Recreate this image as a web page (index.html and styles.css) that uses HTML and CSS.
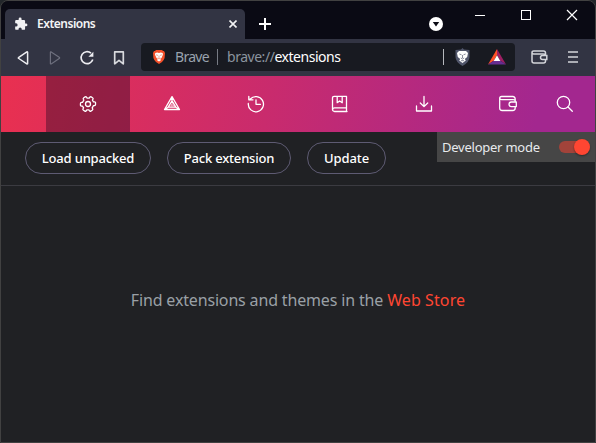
FILE: index.html
```html
<!DOCTYPE html>
<html lang="en">
<head>
<meta charset="utf-8">
<title>Extensions</title>
<link rel="stylesheet" href="styles.css">
</head>
<body>
<div class="window">
  <header class="titlebar">
    <div class="tab">
      <svg class="puzzle" width="14" height="14" viewBox="0 0 24 24"><path fill="#f1f1f3" d="M20.500 11H19V7a2 2 0 0 0-2-2h-4V3.500a2.500 2.500 0 0 0-5 0V5H4a2 2 0 0 0-2 2v3.800h1.500a2.700 2.700 0 0 1 0 5.400H2V20a2 2 0 0 0 2 2h3.800v-1.500a2.700 2.700 0 0 1 5.400 0V22H17a2 2 0 0 0 2-2v-4h1.500a2.500 2.500 0 0 0 0-5z"/></svg>
      <span class="tab-title">Extensions</span>
      <svg class="tab-close" width="8" height="8" viewBox="0 0 8 8"><path d="M.5.5l7 7M7.500.5l-7 7" stroke="#f1f1f3" stroke-width="1.600"/></svg>
    </div>
    <svg class="new-tab" width="12" height="12" viewBox="0 0 12 12"><path d="M6 0v12M0 6h12" stroke="#fff" stroke-width="2"/></svg>
    <svg class="tab-search" width="14" height="14" viewBox="0 0 14 14"><circle cx="7" cy="7" r="7" fill="#fff"/><path d="M3.800 5h6.400L7 9.500z" fill="#0a0a14"/></svg>
    <div class="controls">
      <svg width="46" height="28" viewBox="0 0 46 28"><path d="M18 14.500h10" stroke="#fff"/></svg>
      <svg width="46" height="28" viewBox="0 0 46 28"><rect x="18.500" y="9.500" width="9" height="9" fill="none" stroke="#fff"/></svg>
      <svg width="46" height="28" viewBox="0 0 46 28"><path d="M18 9l10 10M28 9L18 19" stroke="#fff" stroke-width="1.200"/></svg>
    </div>
  </header>

  <div class="toolbar">
    <div class="nav-buttons">
      <svg width="32" height="36" viewBox="0 0 32 36"><path d="M20.600 12.400v11q0 .9-.8.500L11.800 18.500q-.9-.6 0-1.200l8-5.400q.8-.4.800.5z" fill="none" stroke="#ececf0" stroke-width="1.500"/></svg>
      <svg width="32" height="36" viewBox="0 0 32 36"><path d="M11.400 12.400v11q0 .9.800.5l8-5.400q.9-.6 0-1.200l-8-5.400q-.8-.4-.8.500z" fill="none" stroke="#6d6f7d" stroke-width="1.200"/></svg>
      <svg width="32" height="36" viewBox="0 0 32 36"><path d="M21.800 19.600a6 6 0 1 1-1.800-6.500" fill="none" stroke="#ececf0" stroke-width="1.700"/><path d="M22.400 11.700v5h-5z" fill="#ececf0"/></svg>
      <svg width="32" height="36" viewBox="0 0 32 36"><path d="M11.700 11.800h8.600v12L16 20.300l-4.300 3.500z" fill="none" stroke="#d9dade" stroke-width="1.700" stroke-linejoin="round"/></svg>
    </div>
    <div class="address">
      <svg width="12" height="14" viewBox="0 0 12 14"><path fill="#f4502a" d="M3 0h6l1 1h1l1 2-.4 5Q11 10 9 12l-3 2-3-2Q1 10 .4 8L0 3l1-2h1z"/><path fill="#fff" d="M2.300 3l2-.4L6 3l1.700-.4 2 .4.200 1.800L8.500 8 7 9l1.200 1L6 11.500 3.800 10 5 9 3.500 8 2 4.800z"/><path d="M3 4.800l2 .6M9 4.800l-2 .6M6 5.500v3M4.500 8L6 9l1.500-1" fill="none" stroke="#f78063" stroke-width=".7"/></svg>
      <span class="site">Brave</span>
      <i class="sep"></i>
      <span class="url">brave://<b>extensions</b></span>
      <i class="sep sep-end"></i>
      <svg class="shield" width="15" height="18" viewBox="0 0 15 18"><path fill="#51566b" d="M7.500 0L9 1.500l5.500.5V9q0 5-7 9-7-4-7-9V2L6 1.500z"/><path fill="#fff" d="M4 3h7l2 2-.8 4-2.400 2 1 1.500-3.300 2.500-3.300-2.500 1-1.500-2.400-2L2 5z"/><path d="M4.400 6l2.100.8M10.600 6l-2.100.8M7.500 7v3M5.800 10l1.700 1 1.700-1M6 12.700h3" fill="none" stroke="#6c7083" stroke-width=".8"/></svg>
      <svg class="bat" width="18" height="16" viewBox="0 0 18 16"><path d="M9 0L0 15.500l6-4L9 6z" fill="#ff5027"/><path d="M9 0l9 15.500-6-4L9 6z" fill="#9e1f63"/><path d="M0 15.500h18l-6-4H6z" fill="#662d91"/><path d="M9 6.200l3.300 5.800H5.700z" fill="#fff"/></svg>
    </div>
    <svg class="wallet-button" width="17" height="14" viewBox="0 0 17 14"><g fill="none" stroke="#d4d5da" stroke-width="1.500"><path d="M14.500 5V3q0-2-2-2H2.700Q1 1 1 2.500V11q0 2 2 2h9.500q2 0 2-2v-1M1 2.500Q1 4 2.700 4H12q2.500 0 2.500 1.500"/><path d="M15.800 5.500h-4.300a2 2 0 0 0 0 4h4.300z"/></g></svg>
    <svg class="menu-button" width="10" height="12" viewBox="0 0 10 12"><path d="M0 1h10M0 6h10M0 11h10" stroke="#d4d5da" stroke-width="1.600"/></svg>
  </div>

  <nav class="pages">
    <a class="page current"><svg width="18" height="18" viewBox="0 0 18 18"><path transform="rotate(30 9 9)" d="M8.200 1.300H9.800Q10.900 1.300 10.900 2.400V3.400L12.700 4.400 13.600 3.900Q14.500 3.400 15 4.300L15.800 5.700Q16.300 6.600 15.400 7.200L14.600 7.700V10.300L15.400 10.800Q16.300 11.400 15.800 12.300L15 13.700Q14.500 14.600 13.600 14.100L12.700 13.600 10.900 14.600V15.600Q10.900 16.700 9.800 16.700H8.200Q7.100 16.700 7.100 15.600V14.600L5.300 13.600 4.400 14.100Q3.500 14.600 3 13.700L2.200 12.300Q1.700 11.400 2.600 10.800L3.400 10.300V7.700L2.600 7.200Q1.700 6.600 2.200 5.700L3 4.300Q3.500 3.400 4.400 3.900L5.300 4.400 7.100 3.400V2.400Q7.100 1.300 8.200 1.300z"/><circle cx="9" cy="9" r="2.500"/></svg></a>
    <a class="page"><svg width="18" height="18" viewBox="0 0 18 18"><path d="M9 1.700L1.500 14.500h15zM9 5.800l-3.800 6.400h7.600zM9 1.700v4.100M1.500 14.500l3.700-2.300M16.500 14.500l-3.700-2.300"/><path d="M9 8.800l-1.200 2h2.400z" stroke-width=".6"/></svg></a>
    <a class="page"><svg width="18" height="18" viewBox="0 0 18 18"><path d="M1.300 8.500A7.600 7.600 0 1 0 3.300 4M1.800 1.300v3.500H6M3.300 4L2 4.800M9 4.800v4.500h4.500"/></svg></a>
    <a class="page"><svg width="18" height="18" viewBox="0 0 18 18"><path d="M16 16.500H3.500a2 2 0 0 1-2-2V3q0-1.700 1.700-1.700h12.300v11.500H3.500a1.800 1.800 0 0 0-1.800 1.800M15.500 12.800v3.500M6.200 1.300v6.400L8.700 6l2.500 1.700V1.300"/></svg></a>
    <a class="page"><svg width="18" height="18" viewBox="0 0 18 18"><path d="M9 1.500v9.800M5.300 8L9 11.600 12.700 8M1.500 11v5h15v-5"/></svg></a>
    <a class="page"><svg width="18" height="18" viewBox="0 0 18 18"><path d="M16.200 6V4q0-2.500-2.500-2.500H2.500Q.7 1.500.7 3.300V13q0 2.500 2.500 2.500h10.500q2.500 0 2.500-2.500v-1M.7 3.300q0 1.400 2 1.400h11.500q2 0 2 1.300M17.300 7h-5a2.300 2.300 0 0 0 0 4.600h5z"/></svg></a>
    <a class="page find"><svg width="18" height="18" viewBox="0 0 18 18"><circle cx="7.500" cy="7.500" r="6.200"/><path d="M12 12l4.300 4.300"/></svg></a>
  </nav>

  <div class="actions">
    <button class="load"><span>Load unpacked</span></button>
    <button class="pack"><span>Pack extension</span></button>
    <button class="update"><span>Update</span></button>
    <label class="developer"><span>Developer mode</span><i class="switch"></i></label>
  </div>
  <main class="empty"><p>Find extensions and themes in the <a>Web Store</a></p></main>
</div>
</body>
</html>
```
FILE: styles.css
```css
* { box-sizing: border-box; }
body { margin: 0; background: #22262a; overflow: hidden; }
svg { display: block; flex: none; }
.window {
  width: 596px; height: 443px; overflow: hidden;
  border: 1px solid #414141; border-radius: 8px 8px 0 0;
  background: #202124; display: flex; flex-direction: column;
  font-family: "Noto Sans", sans-serif;
}
.titlebar { height: 38px; flex: none; background: #0a0a14; display: flex; }
.tab {
  width: 240px; height: 30px; margin: 8px 0 0 4px; padding: 0 8px 0 9px;
  border-radius: 5px 5px 0 0; background: #323443; display: flex; align-items: center;
}
.tab-title { margin: -1px 0 0 9px; font-size: 12px; font-weight: 600; letter-spacing: -.5px; color: #f4f4f6; }
.tab-close { margin-left: auto; }
.new-tab { margin: 17px 0 0 14px; }
.tab-search { margin: 16px 0 0 158px; }
.controls { display: flex; margin-left: 14px; }
.toolbar { height: 37px; flex: none; background: #323443; display: flex; align-items: center; }
.nav-buttons { display: flex; margin-left: 6px; }
.address {
  width: 374px; height: 28px; margin: 0 0 1px 6px; padding-left: 12px;
  border-radius: 4px; background: #181a21; display: flex; align-items: center;
  font-size: 14px; white-space: nowrap;
}
.site { width: 34px; margin: -1px 0 0 10px; color: #99a2ad; letter-spacing: -.7px; }
.sep { width: 1px; height: 16px; margin-left: 8px; background: #777b84; }
.url { width: 114px; margin: -1px 0 0 9px; color: #8b949e; letter-spacing: -.47px; }
.url b { font-weight: 400; color: #fff; }
.sep-end { margin-left: 102px; background: #b6b8bd; }
.shield { margin-left: 11px; }
.bat { margin-left: 18px; }
.wallet-button { margin-left: 16px; }
.menu-button { margin-left: 20px; }
.wallet-button, .menu-button { margin-bottom: 1px; }
.pages {
  height: 56px; flex: none; padding-left: 45px; display: flex;
  background: linear-gradient(100deg, #e93050 0%, #c92b6d 45%, #a3278f 90%);
}
.page { width: 84px; display: flex; align-items: center; justify-content: center; }
.page svg { fill: none; stroke: #fff; stroke-width: 1.300; stroke-linejoin: round; stroke-linecap: round; }
.current { background: rgba(36, 8, 33, .4); }
.find { width: 30px; }
.actions {
  height: 54px; flex: none; border-bottom: 1px solid #3b3b41;
  padding-left: 24px; display: flex; gap: 16px;
}
.actions button {
  height: 32px; margin-top: 10px; padding: 0; border: 1px solid #5e5b73; border-radius: 16px;
  background: none; color: #fff; font: 500 13px "Noto Sans", sans-serif; white-space: nowrap;
}
.actions .load { width: 126px; letter-spacing: -.17px; }
.actions .pack { width: 124px; letter-spacing: -.18px; }
.actions .update { width: 79px; letter-spacing: -.1px; }
.developer {
  width: 158px; height: 30px; margin-left: auto; padding: 0 5px; background: #464646;
  display: flex; align-items: center; justify-content: space-between;
  font-size: 13px; color: #e8eaed; letter-spacing: -.24px; white-space: nowrap;
}
.switch {
  width: 31px; height: 12px; border-radius: 6px; background: #a2433a;
  display: flex; align-items: center; justify-content: flex-end;
}
.switch::after {
  content: ""; width: 16px; height: 16px; flex: none; border-radius: 50%;
  background: #ff4632; box-shadow: 0 1px 2px rgba(0, 0, 0, .4);
}
.empty { flex: 1; text-align: center; }
.empty p { margin: 103px 0 0; font-size: 16px; line-height: 22px; letter-spacing: -.16px; color: #9aa0a6; white-space: nowrap; }
.empty a { color: #ff4632; letter-spacing: .1px; }
```
